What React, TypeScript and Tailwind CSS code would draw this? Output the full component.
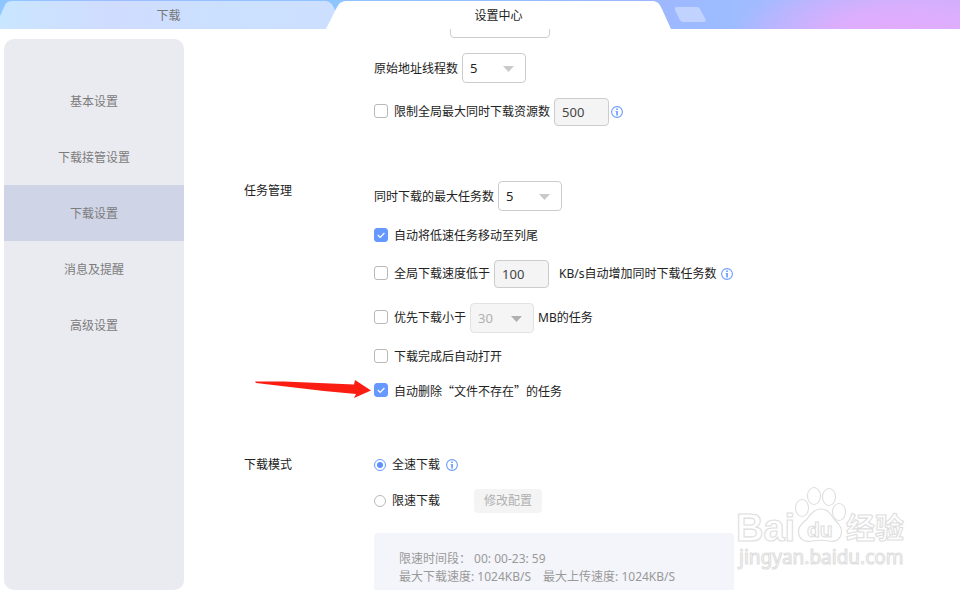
import type { ReactNode } from "react";

const sideItems = ["基本设置", "下载接管设置", "下载设置", "消息及提醒", "高级设置"];

function InfoIcon() {
  return (
    <svg className="h-3 w-3 shrink-0" viewBox="0 0 12 12" fill="none" aria-hidden="true">
      <circle cx="6" cy="6" r="5.4" stroke="#6b9bff" strokeWidth="1.1" />
      <rect x="5.2" y="2.5" width="1.7" height="1.5" fill="#6b9bff" />
      <rect x="5.2" y="5" width="1.7" height="4.5" fill="#6b9bff" />
      <rect x="4.5" y="5" width="1" height="0.8" fill="#6b9bff" />
    </svg>
  );
}

function Check({ id, checked = false, children }: { id: string; checked?: boolean; children: ReactNode }) {
  return (
    <div className="flex items-start gap-[6px]">
      <span className="relative mt-[2px] flex h-[14px] w-[14px]">
        <input
          id={id}
          type="checkbox"
          defaultChecked={checked}
          className="peer h-[14px] w-[14px] appearance-none rounded-[3px] border border-[#b8b8b8] bg-white checked:border-[#6699ff] checked:bg-[#6699ff]"
        />
        <svg
          className="pointer-events-none absolute inset-0 hidden h-[14px] w-[14px] peer-checked:block"
          viewBox="0 0 14 14"
          fill="none"
          aria-hidden="true"
        >
          <path d="M3.8 7l2.4 2.4 4.2-4.4" stroke="white" strokeWidth="1.2" />
        </svg>
      </span>
      <label htmlFor={id}>{children}</label>
    </div>
  );
}

function Select({ id, value, label, disabled = false }: { id: string; value: string; label?: string; disabled?: boolean }) {
  return (
    <span className="relative flex">
      <select
        id={id}
        aria-label={label}
        disabled={disabled}
        defaultValue={value}
        className="h-[30px] w-16 appearance-none rounded-[4px] border border-[#cccccc] bg-white pl-[7px] text-[13px] text-[#222222] disabled:border-[#e2e2e2] disabled:bg-[#f5f5f5] disabled:text-[#b0b0b0] disabled:opacity-100"
      >
        <option>{value}</option>
      </select>
      <svg
        className={`pointer-events-none absolute right-3 top-[13px] h-[6px] w-[11px] ${disabled ? "text-[#b0b0b0]" : "text-[#cacaca]"}`}
        viewBox="0 0 11 6"
        fill="currentColor"
        aria-hidden="true"
      >
        <path d="M0 0h11L5.5 6z" />
      </svg>
    </span>
  );
}

function NumberBox({ label, value }: { label: string; value: string }) {
  return (
    <input
      aria-label={label}
      defaultValue={value}
      className="h-7 w-[55px] rounded-[4px] border border-[#cccccc] bg-[#f4f4f4] px-[7px] text-[13px] text-[#444444]"
    />
  );
}

function Radio({ id, checked = false, children }: { id: string; checked?: boolean; children: ReactNode }) {
  return (
    <div className="flex items-center gap-[6px]">
      <input
        id={id}
        type="radio"
        name="mode"
        defaultChecked={checked}
        className="h-3 w-3 appearance-none rounded-full border border-[#b8b8b8] bg-white bg-clip-content p-[2px] checked:border-[#6699ff] checked:bg-[#5b92ff]"
      />
      <label htmlFor={id}>{children}</label>
    </div>
  );
}

function Section({ title, children }: { title: string; children: ReactNode }) {
  return (
    <section className="flex">
      <h2 className="w-[130px] shrink-0">{title}</h2>
      <div className="flex min-w-0 flex-1 flex-col gap-[14px]">{children}</div>
    </section>
  );
}

function Watermark() {
  return (
    <svg
      className="pointer-events-none absolute bottom-[18px] right-[50px] h-[86px] w-[176px]"
      viewBox="0 0 176 86"
      fill="#ffffff"
      stroke="#dedede"
      strokeWidth="1.1"
      aria-hidden="true"
    >
      <ellipse cx="68" cy="22" rx="6.5" ry="8.5" />
      <ellipse cx="80" cy="10" rx="6.5" ry="8.5" />
      <ellipse cx="95" cy="11" rx="6.5" ry="8.5" />
      <ellipse cx="105" cy="26" rx="6.5" ry="8.5" />
      <path d="M87 23c-8 0-11 7-15 11-6 5-9 9-7 15 2 6 8 7 13 6 6-1 11-1 17 0 5 1 10 0 12-6 2-6-1-10-6-15-4-4-6-11-14-11z" />
      <text x="2" y="55" className="font-['Liberation_Sans',sans-serif] text-[38px] font-bold">Bai</text>
      <text x="73" y="51" className="font-['Liberation_Sans',sans-serif] text-[21px] font-bold">du</text>
      <text x="112" y="53" className="font-['Noto_Sans_CJK_SC',sans-serif] text-[29px] font-bold">经验</text>
      <text x="5" y="78" className="font-['Noto_Sans',sans-serif] text-[19px]">jingyan.baidu.com</text>
    </svg>
  );
}

export default function App() {
  return (
    <div className="relative flex h-screen flex-col overflow-hidden bg-white font-['Noto_Sans','Noto_Sans_CJK_SC',sans-serif] text-xs leading-5 text-[#222222]">
      <header className="flex h-[29px] shrink-0 bg-[radial-gradient(ellipse_170px_60px_at_94%_120%,#e3abfb_0%,#dcaefd_40%,transparent_100%),linear-gradient(90deg,#8fc6ff_0%,#9dbcff_15%,#8dc5ff_35%,#9db6ff_66%,#9dbcff_76%,#a8b9ff_83%,#c6b0ff_100%)] pt-px">
        <button className="relative w-[337px] shrink-0 pt-[2px] text-[#777777]">
          <svg className="absolute inset-0 h-full w-full" viewBox="0 0 337 28" preserveAspectRatio="none" aria-hidden="true">
            <defs>
              <linearGradient id="tab" x1="0" y1="0" x2="1" y2="0">
                <stop offset="0" stopColor="#c9e6ff" />
                <stop offset="0.33" stopColor="#d0dcff" />
                <stop offset="0.65" stopColor="#cbe0ff" />
                <stop offset="1" stopColor="#cddfff" />
              </linearGradient>
            </defs>
            <path d="M0 28V15L5 4Q7 0 12 0H325Q330 0 333 5L337 13V28z" fill="url(#tab)" />
          </svg>
          <span className="relative">下载</span>
        </button>
        <button className="relative -ml-[11px] w-[345px] shrink-0 pt-[2px]">
          <svg className="absolute inset-0 h-full w-full" viewBox="0 0 345 28" preserveAspectRatio="none" aria-hidden="true">
            <path d="M0 28L11 6Q14 0 20 0H327Q332 0 335 6L345 28z" fill="white" />
          </svg>
          <span className="relative">设置中心</span>
        </button>
        <button aria-label="新标签" className="ml-[3px] mt-[6px] h-[15px] w-8">
          <svg viewBox="0 0 32 15" className="h-[15px] w-8" aria-hidden="true">
            <path d="M3 0H23Q25 0 26 2L32 13Q32 15 30 15H9Q7 15 6 13L1 3Q0 0 3 0z" fill="#c1d2ff" />
          </svg>
        </button>
      </header>

      <div className="flex min-h-0 flex-1">
        <nav className="ml-1 mt-[10px] w-[180px] shrink-0 rounded-[10px] bg-[#eaebf1] pt-[34px]">
          {sideItems.map((item) => (
            <button
              key={item}
              className={`block h-14 w-full pt-[2px] text-[#7c7c7c] ${item === "下载设置" ? "bg-[#cfd4e6]" : ""}`}
            >
              {item}
            </button>
          ))}
        </nav>

        <main className="ml-[60px] min-w-0 flex-1 overflow-hidden">
          <div className="-mt-[19px] ml-[130px] flex flex-col gap-[15px]">
            <input
              aria-label="线程数"
              className="ml-[76px] h-7 w-[100px] shrink-0 rounded-[4px] border border-[#cccccc] bg-white"
            />
            <div className="flex items-center gap-1">
              <label htmlFor="threads" className="pt-[2px]">原始地址线程数</label>
              <Select id="threads" value="5" />
            </div>
            <div className="flex items-center gap-1">
              <Check id="limit">限制全局最大同时下载资源数</Check>
              <span className="flex items-center gap-[2px]">
                <NumberBox label="最大资源数" value="500" />
                <InfoIcon />
              </span>
            </div>
          </div>

          <div className="mt-[55px] flex flex-col gap-[53px]">
            <Section title="任务管理">
              <div className="flex items-center gap-1 pb-px">
                <label htmlFor="tasks" className="pt-[2px]">同时下载的最大任务数</label>
                <Select id="tasks" value="5" />
              </div>
              <Check id="slow" checked>自动将低速任务移动至列尾</Check>
              <div className="flex items-center gap-1">
                <Check id="speed">全局下载速度低于</Check>
                <NumberBox label="下载速度" value="100" />
                <span className="flex items-center gap-[5px] pl-[6px]">
                  <span>KB/s自动增加同时下载任务数</span>
                  <InfoIcon />
                </span>
              </div>
              <div className="flex items-center gap-1 pt-px">
                <Check id="small">优先下载小于</Check>
                <Select id="size" label="任务大小" value="30" disabled />
                <span>MB的任务</span>
              </div>
              <Check id="open">下载完成后自动打开</Check>
              <div className="relative">
                <svg
                  className="pointer-events-none absolute -left-[120px] -top-px h-5 w-[118px]"
                  viewBox="0 0 118 20"
                  aria-hidden="true"
                >
                  <path d="M1 1.500L30 1.500 100 4.500 101 0 117 10.500 100 18 102 14 70 11 2 3z" fill="#fb1d12" />
                </svg>
                <Check id="missing" checked>
                  自动删除<span className="font-['Noto_Sans_CJK_SC',sans-serif]">“文件不存在”</span>的任务
                </Check>
              </div>
            </Section>

            <Section title="下载模式">
              <div className="flex items-center gap-[6px]">
                <Radio id="full" checked>全速下载</Radio>
                <InfoIcon />
              </div>
              <div className="flex items-center gap-[34px]">
                <Radio id="limited">限速下载</Radio>
                <button disabled className="h-6 w-[68px] rounded-[4px] bg-[#f4f4f4] text-[#b0b0b0]">
                  修改配置
                </button>
              </div>
              <div className="mt-[6px] w-[360px] rounded-[4px] bg-[#f4f5fa] px-[25px] pb-4 pt-[17px] leading-[18px] text-[#999999]">
                <p>限速时间段： 00: 00-23: 59</p>
                <p>
                  <span>最大下载速度: 1024KB/S</span>
                  <span className="ml-3">最大上传速度: 1024KB/S</span>
                </p>
              </div>
            </Section>
          </div>
        </main>
      </div>
      <Watermark />
    </div>
  );
}
